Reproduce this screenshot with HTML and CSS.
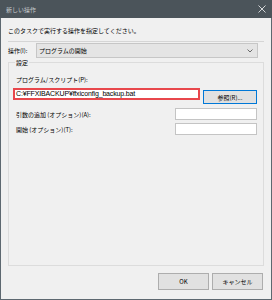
FILE: index.html
```html
<!DOCTYPE html>
<html lang="ja">
<head>
  <meta charset="UTF-8" />
  <title>新しい操作</title>
  <link rel="stylesheet" href="styles.css">
</head>
<body>

<div class="window">
  <!-- Title bar -->
  <div class="titlebar">
    <span class="title">新しい操作</span>
    <svg class="close" width="8" height="8" viewBox="0 0 8 8">
      <path d="M0.5 0.5 L7.5 7.5 M7.5 0.5 L0.5 7.5" stroke="#d4d6d8" stroke-width="1" fill="none" />
    </svg>
  </div>

  <div class="content">
    <p class="intro">このタスクで実行する操作を指定してください。</p>
    <div class="sep"></div>

    <div class="action-row">
      <span class="action-label">操作(I):</span>
      <div class="combo">
        <span>プログラムの開始</span>
        <svg class="chevron" width="6" height="4" viewBox="0 0 6 4">
          <path d="M0.5 0.5 L3 3 L5.5 0.5" stroke="#6a6a6a" stroke-width="1" fill="none" />
        </svg>
      </div>
    </div>

    <!-- Settings -->
    <fieldset class="group">
      <legend>設定</legend>
      <div class="field-label">プログラム/スクリプト(P):</div>
      <div class="program-row">
        <div class="textbox path">C:¥FFXIBACKUP¥ffxiconfig_backup.bat</div>
        <button class="btn btn-focus">参照(R)...</button>
      </div>
      <div class="arg-row">
        <span class="arg-label">引数の追加 (オプション)(A):</span>
        <div class="textbox small"></div>
      </div>
      <div class="arg-row second">
        <span class="arg-label">開始 (オプション)(T):</span>
        <div class="textbox small"></div>
      </div>
    </fieldset>

    <div class="footer">
      <button class="btn btn-footer">OK</button>
      <button class="btn btn-footer">キャンセル</button>
    </div>
  </div>
</div>

</body>
</html>
```

FILE: styles.css
```css
* {
  box-sizing: border-box;
}

body {
  margin: 0;
  font-family: "Noto Sans CJK JP", "Liberation Sans", sans-serif;
  font-size: 6px;
  color: #000;
}

.window {
  width: 272px;
  height: 300px;
  display: flex;
  flex-direction: column;
  background: #f0f0f0;
  border: 1px solid #5d6870;
  border-top: none;
}

.titlebar {
  height: 18px;
  flex-shrink: 0;
  display: flex;
  align-items: center;
  justify-content: space-between;
  background: #4b545a;
  padding: 0 6px 0 6px;
  margin: 0 -1px;
}

.title {
  color: #c6c9cc;
  line-height: 9px;
}

.close {
  display: block;
  margin-top: -1px;
}

.content {
  flex: 1;
  display: flex;
  flex-direction: column;
  padding: 0 7px;
}

.intro {
  margin: 8px 0 0;
  line-height: 9px;
}

.sep {
  height: 1px;
  margin-top: 6px;
  background: #d5d5d5;
}

/* Action */
.action-row {
  display: flex;
  align-items: center;
  margin-top: 1px;
  padding-right: 6px;
}

.action-label {
  width: 28px;
  line-height: 9px;
}

.combo {
  flex: 1;
  height: 15px;
  display: flex;
  align-items: center;
  justify-content: space-between;
  background: #e4e4e4;
  border: 1px solid #c6c6c6;
  padding: 0 4px 0 2px;
}

.chevron {
  display: block;
}

/* Settings group */
.group {
  flex: 1;
  margin: 0;
  padding: 0 6px 0 4px;
  border: 1px solid #dcdcdc;
  min-width: 0;
}

.group legend {
  padding: 0 1px;
  margin-left: 2px;
  line-height: 9px;
}

.field-label {
  margin-top: 8px;
  padding-left: 3px;
  line-height: 9px;
}

.program-row {
  display: flex;
  align-items: flex-start;
  margin-top: 4px;
}

.textbox {
  height: 12px;
  background: #fff;
  border: 1px solid #c4c4c4;
}

.textbox.path {
  width: 187px;
  border: 2px solid #e8474c;
  padding-left: 1px;
  font-family: "Liberation Sans", sans-serif;
  font-size: 7px;
  line-height: 8px;
  letter-spacing: -0.15px;
  white-space: nowrap;
  overflow: hidden;
}

.btn {
  font-family: "Noto Sans CJK JP", "Liberation Sans", sans-serif;
  font-size: 6px;
  color: #000;
  background: #e1e1e1;
  border: 1px solid #adadad;
  padding: 0;
  line-height: 9px;
}

.btn-focus {
  width: 54px;
  height: 14px;
  margin-left: 3px;
  margin-top: 2px;
  border-color: #0078d7;
}

.arg-row {
  display: flex;
  align-items: center;
  justify-content: space-between;
  margin-top: 4px;
}

.arg-row.second {
  margin-top: 3px;
}

.arg-label {
  padding-left: 3px;
  line-height: 9px;
  margin-top: 1px;
}

.textbox.small {
  width: 82px;
}

/* Footer */
.footer {
  display: flex;
  justify-content: flex-end;
  gap: 3px;
  margin: 7px 1px 9px 0;
}

.btn-footer {
  width: 51px;
  height: 17px;
}
```
